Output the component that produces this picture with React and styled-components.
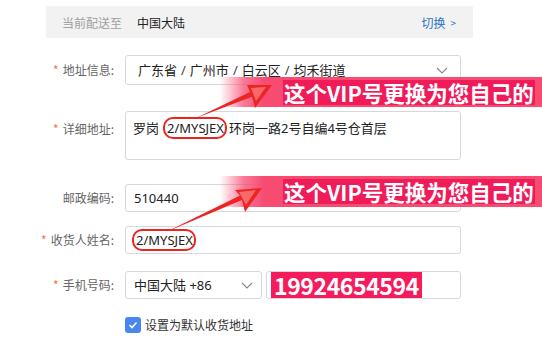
import React from "react";
import styled, { createGlobalStyle } from "styled-components";

const GlobalStyle = createGlobalStyle`
  html, body {
    margin: 0;
    padding: 0;
    background: #fff;
  }
  * {
    box-sizing: border-box;
  }
`;

const Page = styled.div`
  position: relative;
  width: 542px;
  height: 338px;
  overflow: hidden;
  background: #fff;
  font-family: "Noto Sans CJK SC", "Noto Sans", sans-serif;
  color: #333;
  padding-top: 6px;
`;

const TopBar = styled.div`
  margin-left: 46px;
  width: 427px;
  height: 32px;
  background: #f2f2f2;
  display: flex;
  align-items: center;
  padding: 0 17px 0 16px;
  font-size: 12px;
`;

const Muted = styled.span`
  color: #a0a0a0;
  margin-right: 15px;
`;

const Country = styled.span`
  color: #222;
`;

const SwitchLink = styled.a`
  margin-left: auto;
  color: #2b73c9;
  text-decoration: none;
  display: flex;
  align-items: center;
  gap: 5px;
  span {
    font-size: 10px;
  }
`;

const Row = styled.div`
  display: grid;
  grid-template-columns: 114px 336px;
  column-gap: 11px;
  align-items: ${(p) => (p.$top ? "start" : "center")};
  margin-top: ${(p) => p.$mt}px;
`;

const Label = styled.div`
  text-align: right;
  font-size: 12px;
  color: #666;
  line-height: 18px;
  padding-top: ${(p) => p.$pt || 0}px;
`;

const Star = styled.span`
  color: #f5703c;
  margin-right: 4px;
`;

const Box = styled.div`
  position: relative;
  height: ${(p) => p.$h || 28}px;
  border: 1px solid #d6d8dd;
  border-radius: 3px;
  background: #fff;
  display: flex;
  align-items: ${(p) => (p.$top ? "flex-start" : "center")};
  padding: ${(p) => (p.$top ? "7px 7px" : `0 ${p.$px ?? 8}px`)};
  font-family: "Noto Sans", "Noto Sans CJK SC", sans-serif;
  font-size: 13px;
  line-height: 18px;
  color: #222;
  white-space: pre;
`;

const Sep = styled.span`
  margin: 0 4px;
  color: #444;
`;

const Chevron = styled.svg`
  margin-left: auto;
  flex: none;
`;

const PhoneFields = styled.div`
  display: flex;
  gap: 4px;
`;

const Circled = styled.span`
  position: relative;
  display: inline-block;
  margin: ${(p) => p.$m || "0"};
  &::after {
    content: "";
    position: absolute;
    left: -4px;
    right: -3px;
    top: -2px;
    bottom: -2px;
    border: 2.5px solid #e8261f;
    border-radius: 10px;
  }
`;

const PhoneHighlight = styled.span`
  display: inline-block;
  background: #f41c5d;
  color: #fff;
  font-family: "Noto Sans CJK SC", sans-serif;
  font-weight: 700;
  font-size: 23px;
  line-height: 26px;
  height: 26px;
  padding: 0 3px;
  letter-spacing: -0.4px;
`;

const CheckRow = styled.label`
  display: flex;
  align-items: center;
  gap: 4px;
  font-size: 12px;
  color: #333;
`;

const CheckBox = styled.span`
  width: 16px;
  height: 16px;
  border-radius: 3px;
  background: #4a86f0;
  display: flex;
  align-items: center;
  justify-content: center;
`;

const Banner = styled.div`
  position: absolute;
  left: 220px;
  top: ${(p) => p.$top}px;
  width: 322px;
  height: ${(p) => p.$h}px;
  background: linear-gradient(
    to right,
    rgba(247, 75, 114, 0) 0px,
    rgba(247, 75, 114, 0.75) 24px,
    #f74b72 44px
  );
  display: flex;
  align-items: center;
  padding-left: 63px;
`;

const BannerText = styled.span`
  background: #f01c5a;
  color: #fff;
  font-weight: 700;
  font-size: 21.5px;
  line-height: 25px;
  height: 25px;
  padding: 0 1px;
  white-space: nowrap;
`;

const ArrowLayer = styled.svg`
  position: absolute;
  left: 0;
  top: 0;
  pointer-events: none;
`;

const ChevronIcon = () => (
  <Chevron width="12" height="7" viewBox="0 0 12 7">
    <polyline points="1,1 6,6 11,1" fill="none" stroke="#888" strokeWidth="1.1" />
  </Chevron>
);

const App = () => (
  <>
    <GlobalStyle />
    <Page>
      <TopBar>
        <Muted>当前配送至</Muted>
        <Country>中国大陆</Country>
        <SwitchLink>
          切换<span>&gt;</span>
        </SwitchLink>
      </TopBar>

      <Row $mt={17}>
        <Label>
          <Star>*</Star>地址信息:
        </Label>
        <Box $h={30} $px={12}>
          广东省<Sep>/</Sep>广州市<Sep>/</Sep>白云区<Sep>/</Sep>均禾街道
          <ChevronIcon />
        </Box>
      </Row>

      <Row $mt={26} $top>
        <Label $pt={9}>
          <Star>*</Star>详细地址:
        </Label>
        <Box $h={49} $top>
          罗岗<Circled $m="0 5px 0 8px">2/MYSJEX</Circled>环岗一路2号自编4号仓首层
        </Box>
      </Row>

      <Row $mt={24}>
        <Label>邮政编码:</Label>
        <Box>510440</Box>
      </Row>

      <Row $mt={14}>
        <Label>
          <Star>*</Star>收货人姓名:
        </Label>
        <Box $px={10}>
          <Circled>2/MYSJEX</Circled>
        </Box>
      </Row>

      <Row $mt={17}>
        <Label>
          <Star>*</Star>手机号码:
        </Label>
        <PhoneFields>
          <Box style={{ width: 137 }}>
            中国大陆 +86
            <ChevronIcon />
          </Box>
          <Box style={{ flex: 1 }} $px={4}>
            <PhoneHighlight>19924654594</PhoneHighlight>
          </Box>
        </PhoneFields>
      </Row>

      <Row $mt={17}>
        <div />
        <CheckRow>
          <CheckBox>
            <svg width="10" height="8" viewBox="0 0 10 8">
              <polyline points="1.5,4 4,6.5 8.5,1.5" fill="none" stroke="#fff" strokeWidth="1.6" />
            </svg>
          </CheckBox>
          设置为默认收货地址
        </CheckRow>
      </Row>

      <Banner $top={77} $h={30}>
        <BannerText>这个VIP号更换为您自己的</BannerText>
      </Banner>
      <Banner $top={176} $h={31}>
        <BannerText>这个VIP号更换为您自己的</BannerText>
      </Banner>

      <ArrowLayer width="542" height="338" viewBox="0 0 542 338">
        <polygon points="196,118 252,96.7 255,108 272,85 247,85 250,92.1" fill="#ee2424" />
        <polygon points="251,88 266,87 256,101" fill="#ff9a9a" opacity="0.6" />
        <polygon points="166,232 242,200 245,212 262,188 235,190 240,195.5" fill="#ee2424" />
        <polygon points="239,192 256,190 246,205" fill="#ff9a9a" opacity="0.6" />
      </ArrowLayer>
    </Page>
  </>
);

export default App;
